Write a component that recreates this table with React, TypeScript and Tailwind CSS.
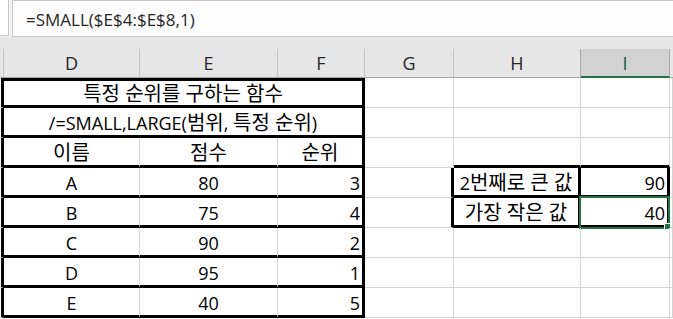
import React from 'react';

const G = 'border-r border-b border-[#d4d4d4]';
const FONT = "font-['Open_Sans','Noto_Sans_CJK_KR',sans-serif]";

// thick table borders
const LEFT_EDGE = 'border-r-[3px] border-r-black border-b border-b-[#d4d4d4]';
const IN_ROW = 'border-r border-r-[#d4d4d4] border-b-[3px] border-b-black';
const END_ROW = 'border-r-[3px] border-r-black border-b-[3px] border-b-black';
const BOX_LEFT = 'border-r-[3px] border-r-black border-b border-b-[#d4d4d4]';

type CellProps = {
  w: string;
  b?: string;
  align?: 'center' | 'right';
  children?: React.ReactNode;
  extra?: React.ReactNode;
};

function Cell({ w, b = G, align = 'center', children, extra }: CellProps) {
  return (
    <div
      className={`relative h-full shrink-0 flex items-center pt-[2px] text-[18px] leading-[20px] text-black whitespace-pre ${w} ${b} ${
        align === 'right' ? 'justify-end pr-[2px]' : 'justify-center'
      }`}
    >
      {children}
      {extra}
    </div>
  );
}

// Hangul runs are set a little larger than the Latin text around them
function K({ children }: { children: React.ReactNode }) {
  return <span className="text-[20px] leading-[20px]">{children}</span>;
}

function Row({ children }: { children: React.ReactNode }) {
  return <div className="flex h-[30px]">{children}</div>;
}

function Tail() {
  return (
    <>
      <Cell w="w-[89px]" />
      <Cell w="w-[127px]" />
      <Cell w="w-[89px]" />
      <Cell w="w-[3px]" />
    </>
  );
}

function Selection() {
  return (
    <>
      <div className="pointer-events-none absolute -left-[2px] -top-[2px] -right-[3px] -bottom-[4px] border-2 border-[#217346]" />
      <div className="pointer-events-none absolute left-[83px] top-[25px] w-[7px] h-[7px] bg-[#217346] border border-white" />
    </>
  );
}

const data = [
  { name: 'A', score: '80', rank: '3' },
  { name: 'B', score: '75', rank: '4' },
  { name: 'C', score: '90', rank: '2' },
  { name: 'D', score: '95', rank: '1' },
  { name: 'E', score: '40', rank: '5' },
];

function HeaderCell({ w, label, cls }: { w: string; label?: string; cls: string }) {
  return (
    <div className={`h-full shrink-0 flex items-center justify-center text-[18px] leading-[20px] ${w} ${cls}`}>
      {label}
    </div>
  );
}

export default function App() {
  return (
    <div className={`w-[673px] h-[319px] overflow-hidden bg-white ${FONT}`}>
      {/* formula bar */}
      <div className="h-[49px] bg-[#e6e6e6]">
        <div className="h-[37px] flex bg-[#f3f3f3]">
          <div className="w-[9px] h-[36px] bg-white border-r border-b border-[#c6c6c6]" />
          <div className="ml-[3px] flex-1 h-[37px] bg-[#fdfdfd] border-l border-t border-b border-[#c6c6c6] flex items-center pl-[13px] pt-[3px] text-[17px] leading-[20px] text-[#262626]">
            =SMALL($E$4:$E$8,1)
          </div>
        </div>
      </div>

      {/* column headers */}
      <div className="flex h-[29px] bg-[#e6e6e6] text-[#262626]">
        <HeaderCell w="w-[4px]" cls="border-r border-r-[#c4c4c4] border-b border-b-[#a6a6a6]" />
        <HeaderCell w="w-[136px]" label="D" cls="border-r border-r-[#c4c4c4] border-b border-b-[#a6a6a6]" />
        <HeaderCell w="w-[138px]" label="E" cls="border-r border-r-[#c4c4c4] border-b border-b-[#a6a6a6]" />
        <HeaderCell w="w-[87px]" label="F" cls="border-r border-r-[#c4c4c4] border-b border-b-[#a6a6a6]" />
        <HeaderCell w="w-[89px]" label="G" cls="border-r border-r-[#c4c4c4] border-b border-b-[#a6a6a6]" />
        <HeaderCell w="w-[127px]" label="H" cls="border-r border-r-[#ababab] border-b border-b-[#a6a6a6]" />
        <HeaderCell
          w="w-[89px]"
          label="I"
          cls="bg-[#d2d2d2] text-[#185c37] border-r border-r-[#ababab] border-b-2 border-b-[#217346]"
        />
        <HeaderCell w="w-[3px]" cls="border-b border-b-[#a6a6a6]" />
      </div>

      {/* sheet body */}
      <div className="flex flex-col">
        <Row>
          <Cell w="w-[4px]" b={LEFT_EDGE} />
          <Cell w="w-[361px]" b={`border-t-[3px] border-t-black ${END_ROW}`}>
            <K>특정 순위를 구하는 함수</K>
          </Cell>
          <Tail />
        </Row>
        <Row>
          <Cell w="w-[4px]" b={LEFT_EDGE} />
          <Cell w="w-[361px]" b={END_ROW}>
            /=SMALL,LARGE(<K>범위</K>, <K>특정 순위</K>)
          </Cell>
          <Tail />
        </Row>
        <Row>
          <Cell w="w-[4px]" b={LEFT_EDGE} />
          <Cell w="w-[136px]" b={IN_ROW}><K>이름</K></Cell>
          <Cell w="w-[138px]" b={IN_ROW}><K>점수</K></Cell>
          <Cell w="w-[87px]" b={END_ROW}><K>순위</K></Cell>
          <Cell w="w-[89px]" />
          <Cell w="w-[127px]" b={IN_ROW} />
          <Cell w="w-[89px]" b={IN_ROW} />
          <Cell w="w-[3px]" />
        </Row>
        {data.map((d, i) => (
          <Row key={d.name}>
            <Cell w="w-[4px]" b={LEFT_EDGE} />
            <Cell w="w-[136px]" b={IN_ROW}>{d.name}</Cell>
            <Cell w="w-[138px]" b={IN_ROW}>{d.score}</Cell>
            <Cell w="w-[87px]" b={END_ROW} align="right">{d.rank}</Cell>
            {i === 0 ? (
              <>
                <Cell w="w-[89px]" b={BOX_LEFT} />
                <Cell w="w-[127px]" b={END_ROW}>2<K>번째로 큰 값</K></Cell>
                <Cell w="w-[89px]" b={END_ROW} align="right">90</Cell>
                <Cell w="w-[3px]" />
              </>
            ) : i === 1 ? (
              <>
                <Cell w="w-[89px]" b={BOX_LEFT} />
                <Cell w="w-[127px]" b={END_ROW}><K>가장 작은 값</K></Cell>
                <Cell w="w-[89px]" b={END_ROW} align="right" extra={<Selection />}>
                  40
                </Cell>
                <Cell w="w-[3px]" />
              </>
            ) : (
              <Tail />
            )}
          </Row>
        ))}
      </div>
    </div>
  );
}
